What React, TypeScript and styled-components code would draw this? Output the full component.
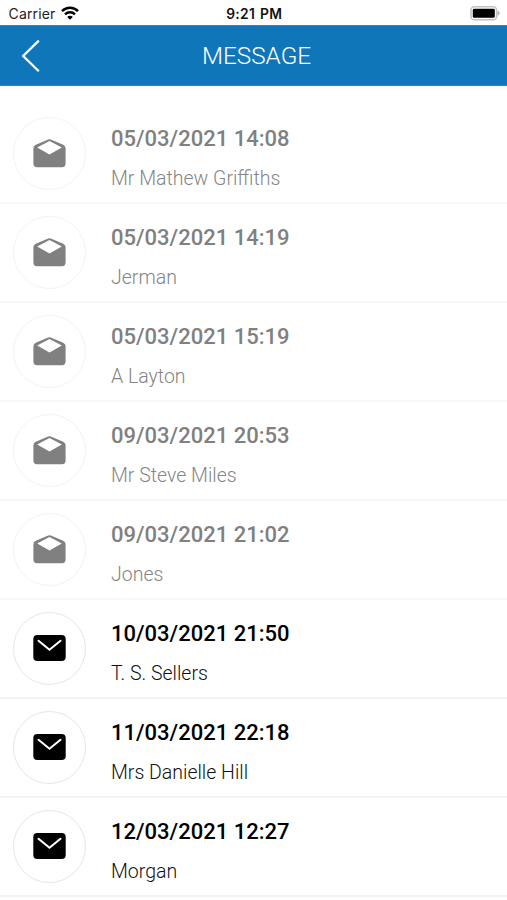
import React from "react";
import styled, { createGlobalStyle } from "styled-components";

const Global = createGlobalStyle`
  * { box-sizing: border-box; }
  body { margin: 0; background: #fff; overflow: hidden; }
`;
const Screen = styled.div`
  width: 507px;
  height: 900px;
  overflow: hidden;
  background: #fff;
  font-family: Roboto, sans-serif;
`;
const StatusBar = styled.div`
  height: 25px;
  display: grid;
  grid-template-columns: 1fr auto 1fr;
  align-items: center;
  padding: 2px 7px 0 8.5px;
  font: 400 14px Inter, sans-serif;
  color: #111;
`;
const Carrier = styled.div`
  display: flex;
  align-items: center;
  gap: 6px;
  color: #222;
  letter-spacing: 0.15px;

  svg {
    margin-top: -2px;
  }
`;
const Time = styled.div`
  font-weight: 600;
  font-size: 13.8px;
  letter-spacing: 0.35px;
  word-spacing: 1px;
`;
const Battery = styled.div`
  display: flex;
  justify-content: flex-end;
`;
const Header = styled.header`
  height: 61px;
  background: #1076ba;
  border-top: 1px solid #2d87c3;
  border-bottom: 1px solid #3089c4;
  color: #fff;
  display: grid;
  grid-template-columns: 60px 1fr 54px;
  align-items: center;
`;
const Back = styled.div`
  display: flex;
  padding-left: 20px;
`;
const Title = styled.h1`
  margin: 0;
  text-align: center;
  font-size: 24.3px;
  font-weight: 300;
  line-height: 30px;
`;
const List = styled.main`
  padding-top: 19px;
`;
const Row = styled.div<{ $read: boolean }>`
  height: 98.94px;
  display: flex;
  align-items: center;
  padding-left: 13px;
  gap: 25px;
  border-bottom: 2px solid ${(p) => (p.$read ? "#f7f7f7" : "#f2f2f2")};
  color: ${(p) => (p.$read ? "#808080" : "#000")};
`;
const Circle = styled.div<{ $read: boolean }>`
  width: 73px;
  height: 73px;
  border: 1px solid ${(p) => (p.$read ? "#f3f3f3" : "#e6e6e6")};
  border-radius: 50%;
  display: flex;
  align-items: center;
  justify-content: center;
`;
const Texts = styled.div`
  display: flex;
  flex-direction: column;
  gap: 12px;
  padding-top: 12px;
`;
const When = styled.div`
  font-size: 22px;
  font-weight: 500;
  line-height: 28px;
`;
const Name = styled.div<{ $read: boolean }>`
  font-size: 19.5px;
  font-weight: 300;
  line-height: 28px;
  color: ${(p) => (p.$read ? "#858585" : "#111")};
`;

const WifiIcon = () => (
  <svg width="18" height="14" viewBox="0 0 18 14" fill="none" stroke="#000" strokeWidth="2.5">
    <path d="M1 5.1C5.5 .7 12.5 .7 17 5.1" />
    <path d="M4 8.3C6.8 5.6 11.2 5.6 14 8.3" />
    <path d="M9 13.7 6.2 10.9C7.8 9.4 10.2 9.4 11.8 10.9Z" fill="#000" stroke="none" />
  </svg>
);

const BatteryIcon = () => (
  <svg width="30" height="15" viewBox="0 0 30 15">
    <rect x="1" y=".8" width="25.6" height="13" rx="3.4" fill="#fff" stroke="#c2c2c2" strokeWidth="1.6" />
    <rect x="2.8" y="2.8" width="22" height="9" rx="1.4" fill="#000" />
    <path d="M27.6 4.8C30.2 5.6 30.2 9 27.6 9.8Z" fill="#b0b0b0" />
  </svg>
);

const BackIcon = () => (
  <svg width="22" height="34" viewBox="0 0 22 34" fill="none" stroke="#fff" strokeWidth="2.3">
    <path d="M18.8 1.6 3.2 17 18.8 32.2" />
  </svg>
);

const OpenMail = () => (
  <svg width="33" height="29" viewBox="0 0 33 29">
    <path
      d="M15.2.5Q16.5-.1 17.8.5L30.2 5.8Q32.6 7 32.6 9.3V24.6Q32.6 28.2 29 28.2H4Q.4 28.2.4 24.6V9.3Q.4 7 2.8 5.8Z"
      fill="#808080"
    />
    <path d="M16.5 2.1 28.8 8.4 16.5 15.4 4.2 8.4Z" fill="#fff" />
  </svg>
);

const ClosedMail = () => (
  <svg width="33" height="27" viewBox="0 0 33 27">
    <rect x=".3" y=".1" width="32.4" height="25.8" rx="4" fill="#000" />
    <path d="M5.5 5.8 16.5 14.7 27.5 5.8" fill="none" stroke="#fff" strokeWidth="2.1" strokeLinecap="round" />
  </svg>
);

const items = [
  { when: "05/03/2021 14:08", name: "Mr Mathew Griffiths", read: true },
  { when: "05/03/2021 14:19", name: "Jerman", read: true },
  { when: "05/03/2021 15:19", name: "A Layton", read: true },
  { when: "09/03/2021 20:53", name: "Mr Steve Miles", read: true },
  { when: "09/03/2021 21:02", name: "Jones", read: true },
  { when: "10/03/2021 21:50", name: "T. S. Sellers", read: false },
  { when: "11/03/2021 22:18", name: "Mrs Danielle Hill", read: false },
  { when: "12/03/2021 12:27", name: "Morgan", read: false },
];

export default function App() {
  return (
    <Screen>
      <Global />
      <StatusBar>
        <Carrier>
          Carrier
          <WifiIcon />
        </Carrier>
        <Time>9:21 PM</Time>
        <Battery>
          <BatteryIcon />
        </Battery>
      </StatusBar>
      <Header>
        <Back>
          <BackIcon />
        </Back>
        <Title>MESSAGE</Title>
      </Header>
      <List>
        {items.map((m) => (
          <Row key={m.when} $read={m.read}>
            <Circle $read={m.read}>{m.read ? <OpenMail /> : <ClosedMail />}</Circle>
            <Texts>
              <When>{m.when}</When>
              <Name $read={m.read}>{m.name}</Name>
            </Texts>
          </Row>
        ))}
      </List>
    </Screen>
  );
}
